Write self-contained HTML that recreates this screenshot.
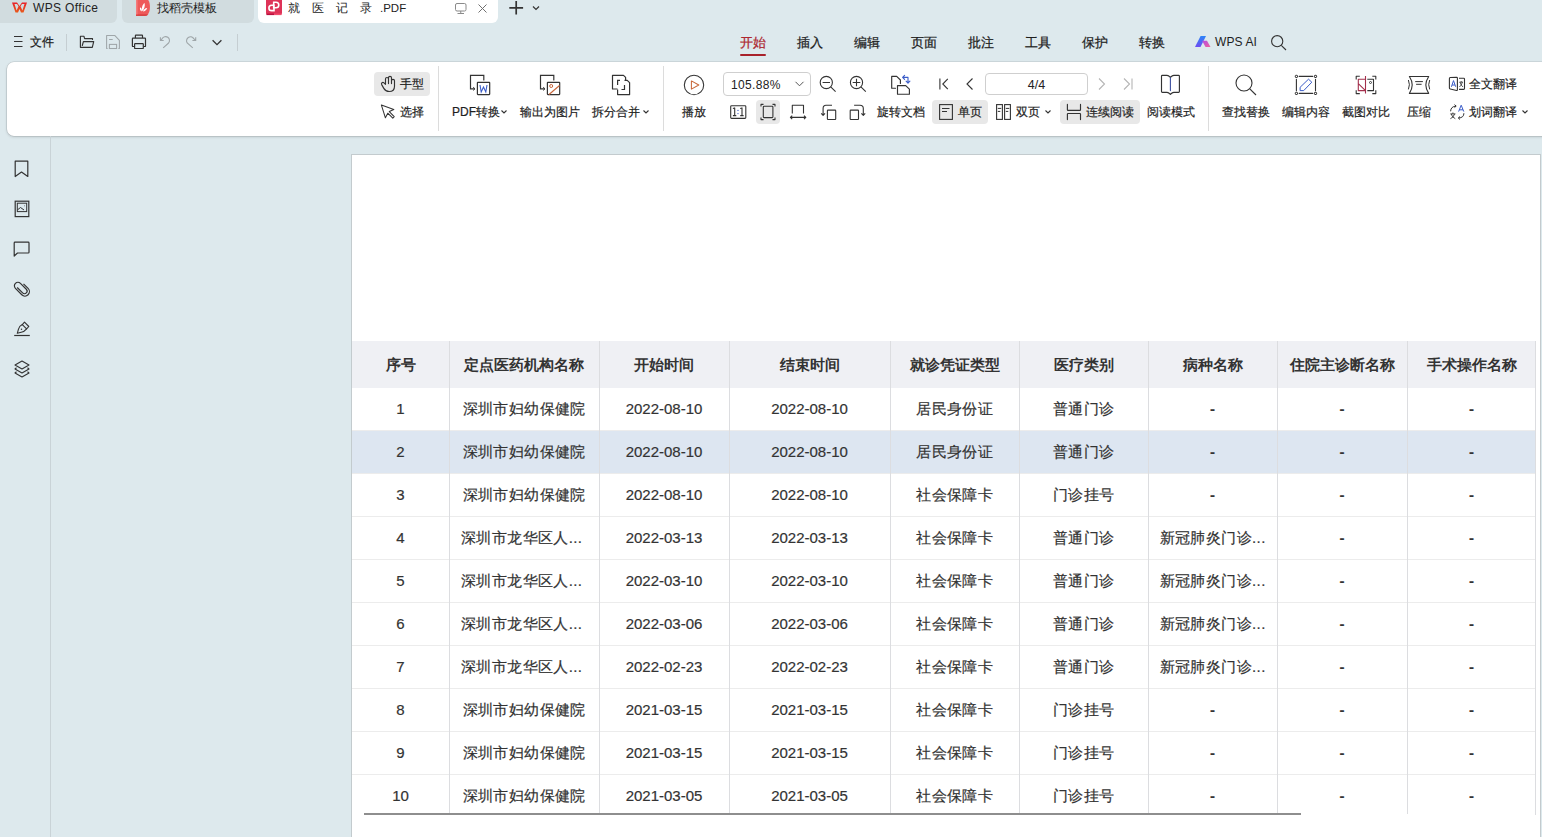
<!DOCTYPE html>
<html><head><meta charset="utf-8">
<style>
*{box-sizing:border-box;margin:0;padding:0}
html,body{width:1542px;height:837px;overflow:hidden}
body{position:relative;background:#dde9ed;font-family:"Liberation Sans",sans-serif;color:#262626}
.a{position:absolute}
svg{position:absolute;overflow:visible}
.tab{position:absolute;top:-6px;height:29px;border-radius:6px;background:#d1dcdf}
.mt{position:absolute;top:34px;font-size:13px;line-height:18px;color:#1e1e1e;-webkit-text-stroke:0.25px #1e1e1e}
.tb{position:absolute;font-size:12px;line-height:14px;color:#1e1e1e;white-space:nowrap;-webkit-text-stroke:0.2px #1e1e1e}
.sep{position:absolute;width:1px;background:#dcdcdc}
.btnbg{position:absolute;background:#e8e8e8;border-radius:4px}
/* table */
#page{position:absolute;left:351px;top:154px;width:1190px;height:700px;background:#fff;border:1px solid #c3cbce}
.th{position:absolute;top:341px;height:47px;line-height:47px;text-align:center;font-size:15px;font-weight:bold;color:#333;white-space:nowrap}
.td{position:absolute;text-align:center;font-size:15px;color:#333;white-space:nowrap;-webkit-text-stroke:0.2px #333}
.dash{font-weight:bold}
.cj{letter-spacing:0.4px;text-indent:0.4px}
</style></head><body>

<!-- ============ TAB BAR ============ -->
<div class="tab" style="left:-6px;width:123px"></div>
<div class="tab" style="left:122px;width:132px"></div>
<div class="tab" style="left:258px;width:240px;background:#fff"></div>

<!-- WPS logo -->
<svg style="left:11px;top:1px" width="17" height="13" viewBox="0 0 17 13">
  <defs><linearGradient id="wg" x1="0" y1="0" x2="0" y2="1"><stop offset="0" stop-color="#e8202a"/><stop offset="1" stop-color="#e85a1a"/></linearGradient></defs>
  <path d="M1 1.5 L6 1.5 L8.5 5 L11 1.5 L16 1.5 L12.5 11.5 L10 11.5 L8.5 8 L7 11.5 L4.5 11.5 Z M3.5 3 L5.6 9.5 L7.5 5.2 L6 3 Z M9.5 5.2 L11.4 9.5 L13.5 3 L11 3 Z" fill="url(#wg)" fill-rule="evenodd"/>
</svg>
<div class="a" style="left:33px;font-size:12px;line-height:15px;color:#222;top:1px;letter-spacing:0.35px">WPS Office</div>

<!-- docer icon -->
<svg style="left:136px;top:0px" width="15" height="17" viewBox="0 0 15 17">
  <path d="M0 -2 H9 C15.6 -2 15.6 15.8 9 15.8 H0 Z" fill="#ee5a5a"/>
  <path d="M0 14.4 H12.3 Q11 15.8 9 15.8 H0 Z" fill="#d33535"/>
  <rect x="0" y="-2" width="1.6" height="16.4" fill="#f47a7a"/>
  <path d="M6.3 11.2 C5.2 8 6.5 4.5 8.6 3.1 C9.3 6.2 8.2 9.3 6.3 11.2 Z M5.6 11.5 C3.7 10.2 3.6 8.3 4.3 7.2 C5.8 8.2 6.2 10 5.6 11.5 Z M7 11.5 C7.3 9.6 9 8 11.2 7.9 C10.5 10 8.8 11.3 7 11.5 Z" fill="#fff"/>
</svg>
<div class="a" style="left:157px;font-size:12px;line-height:15px;color:#222;top:1px">找稻壳模板</div>

<!-- pdf icon -->
<svg style="left:266px;top:-1px" width="16" height="17" viewBox="0 0 16 17">
  <rect x="0" y="-3" width="16" height="19" rx="2" fill="#de3358"/>
  <rect x="0.5" y="14.6" width="7.5" height="1.5" fill="#b8103f"/>
  <rect x="8" y="14.6" width="7.5" height="1.5" fill="#f24d6c"/>
  <path d="M7.7 3.2 H10 A2.8 2.8 0 0 1 10 8.8 H7.7 Z M8 11.6 H5.6 A2.7 2.7 0 0 1 5.6 6.2 H8 Z" fill="none" stroke="#fff" stroke-width="1.6"/>
</svg>
<div class="a" style="left:288px;font-size:12px;line-height:15px;color:#222;top:1px">就</div>
<div class="a" style="left:312px;font-size:12px;line-height:15px;color:#222;top:1px">医</div>
<div class="a" style="left:336px;font-size:12px;line-height:15px;color:#222;top:1px">记</div>
<div class="a" style="left:360px;font-size:12px;line-height:15px;color:#222;top:1px">录</div>
<div class="a" style="left:380px;font-size:11.5px;line-height:15px;color:#222;top:1px">.PDF</div>
<!-- monitor & close -->
<svg style="left:455px;top:3px" width="12" height="11" viewBox="0 0 12 11">
  <rect x="0.5" y="0.5" width="10.5" height="7.5" rx="1.5" fill="none" stroke="#8a8a8a" stroke-width="1"/>
  <path d="M5.75 8 V10 M2.5 10.5 H9" stroke="#8a8a8a" stroke-width="1"/>
</svg>
<svg style="left:478px;top:4px" width="9" height="9" viewBox="0 0 9 9">
  <path d="M0.5 0.5 L8.5 8.5 M8.5 0.5 L0.5 8.5" stroke="#707070" stroke-width="1"/>
</svg>
<svg style="left:509px;top:0px" width="15" height="15" viewBox="0 0 15 15">
  <path d="M7.2 1 V14.6 M0.3 7.8 H14.1" stroke="#333" stroke-width="1.7"/>
</svg>
<svg style="left:532px;top:5px" width="8" height="6" viewBox="0 0 8 6">
  <path d="M1 1.5 L4 4.5 L7 1.5" fill="none" stroke="#333" stroke-width="1.2"/>
</svg>

<!-- ============ MENU BAR ============ -->
<svg style="left:14px;top:36px" width="9" height="11" viewBox="0 0 9 11">
  <path d="M0 0.5 H8.5 M0 5.5 H8.5 M0 10.5 H8.5" stroke="#333" stroke-width="1"/>
</svg>
<div class="mt" style="left:30px;font-size:12px;top:33px">文件</div>
<div class="sep" style="left:66px;top:34px;height:17px;background:#c5ced2"></div>
<!-- folder -->
<svg style="left:78px;top:34px" width="18" height="16" viewBox="0 0 18 16">
  <path d="M2.4 13.3 V2.2 H5.9 L6.6 4.6 H14.5 V5.5 M2.4 13.3 H14.3 L15.7 7.6 H5.4 L4.3 11.5" fill="none" stroke="#333" stroke-width="1.15" stroke-linejoin="round" stroke-linecap="round"/>
</svg>
<!-- save -->
<svg style="left:104px;top:33px" width="18" height="17" viewBox="0 0 18 17">
  <path d="M3.6 15.5 H2.6 V2.4 H10.7 L15.4 7.4 V15.5 H14.4 M5.1 6.4 H8.7" fill="none" stroke="#9fa6a9" stroke-width="1.05" stroke-linejoin="round"/>
  <rect x="5.4" y="11.4" width="7.2" height="4.1" fill="none" stroke="#9fa6a9" stroke-width="1.05"/>
</svg>
<!-- print -->
<svg style="left:130px;top:33px" width="18" height="17" viewBox="0 0 18 17">
  <path d="M5.4 5.1 V2.7 Q5.4 2.2 5.9 2.2 H12 Q12.5 2.2 12.5 2.7 V5.1 M4.6 13.5 H3 Q2.4 13.5 2.4 12.9 V5.7 Q2.4 5.1 3 5.1 H14.9 Q15.5 5.1 15.5 5.7 V12.9 Q15.5 13.5 14.9 13.5 H13.3" fill="none" stroke="#333" stroke-width="1.2" stroke-linejoin="round"/>
  <rect x="4.6" y="10.55" width="8.7" height="4.95" rx="0.6" fill="none" stroke="#333" stroke-width="1.2"/>
</svg>
<!-- undo / redo -->
<svg style="left:158px;top:34px" width="14" height="16" viewBox="0 0 14 16">
  <path d="M2.6 6.3 L4.2 4.6 A3.9 3.9 0 1 1 10.6 9 L5.2 13.8 M2.4 3.2 V6.5 H5.7" fill="none" stroke="#9fa6a9" stroke-width="1.1"/>
</svg>
<svg style="left:183px;top:34px" width="14" height="16" viewBox="0 0 14 16">
  <path d="M12.5 6.3 L10.8 4.6 A3.9 3.9 0 1 0 4.2 9 L9.8 13.8 M12.7 3.2 V6.5 H9.4" fill="none" stroke="#9fa6a9" stroke-width="1.1"/>
</svg>
<svg style="left:212px;top:39px" width="10" height="7" viewBox="0 0 10 7">
  <path d="M0.6 1.2 L5 5.6 L9.4 1.2" fill="none" stroke="#333" stroke-width="1.3"/>
</svg>
<div class="sep" style="left:237px;top:34px;height:17px;background:#c5ced2"></div>

<!-- menu tabs -->
<div class="mt" style="left:740px;color:#ad2830;-webkit-text-stroke:0.25px #ad2830">开始</div>
<div class="a" style="left:740px;top:54px;width:26px;height:2px;background:#a8222b;border-radius:1px"></div>
<div class="mt" style="left:797px">插入</div>
<div class="mt" style="left:854px">编辑</div>
<div class="mt" style="left:911px">页面</div>
<div class="mt" style="left:968px">批注</div>
<div class="mt" style="left:1025px">工具</div>
<div class="mt" style="left:1082px">保护</div>
<div class="mt" style="left:1139px">转换</div>
<svg style="left:1194px;top:35px" width="18" height="13" viewBox="0 0 18 13">
  <defs>
   <linearGradient id="ai1" x1="0" y1="0" x2="0" y2="1"><stop offset="0" stop-color="#2d86f7"/><stop offset="1" stop-color="#6d4cf2"/></linearGradient>
   <linearGradient id="ai2" x1="0" y1="0" x2="1" y2="1"><stop offset="0" stop-color="#b04ee6"/><stop offset="1" stop-color="#f0609c"/></linearGradient>
  </defs>
  <path d="M1 12 L6.5 12 L12 1 L6.6 1 Z" fill="url(#ai1)"/>
  <path d="M8 5.7 L13 5.7 L16.5 12 L11.6 12 Z" fill="url(#ai2)"/>
</svg>
<div class="a" style="left:1215px;top:35px;font-size:12px;line-height:14px;color:#1e1e1e;letter-spacing:0.1px">WPS AI</div>
<svg style="left:1271px;top:35px" width="16" height="16" viewBox="0 0 16 16">
  <circle cx="6.2" cy="6.2" r="5.6" fill="none" stroke="#333" stroke-width="1.1"/>
  <path d="M10.3 10.3 L15 15" stroke="#333" stroke-width="1.1"/>
</svg>

<!-- ============ TOOLBAR PANEL ============ -->
<div class="a" style="left:7px;top:62px;width:1545px;height:74px;background:#fff;border-radius:7px;box-shadow:0 0 0 0.6px rgba(0,0,0,0.13),0 1px 3px rgba(0,0,0,0.16)"></div>

<!-- hand/select -->
<div class="btnbg" style="left:374px;top:72px;width:56px;height:24px"></div>
<svg style="left:378px;top:72px" width="20" height="22" viewBox="0 0 20 22">
  <path d="M7.5 12.3 V7 A1.5 1.5 0 0 1 10.5 7 V11.6 M10.5 7 V5.8 A1.5 1.5 0 0 1 13.5 5.8 V11.6 M13.5 8.8 A1.5 1.5 0 0 1 16.5 8.8 V14.2 Q16.5 19.5 11.2 19.5 Q7.6 19.5 5.8 16.4 L3.7 12.6 Q3.1 11.4 4 10.7 Q5 10 6 10.9 L7.5 12.3" fill="none" stroke="#333" stroke-width="1.15" stroke-linejoin="round" stroke-linecap="round"/>
</svg>
<div class="tb" style="left:400px;top:77px">手型</div>
<svg style="left:380px;top:104px" width="16" height="16" viewBox="0 0 16 16">
  <path d="M1.4 1.1 L13.8 5.6 L9.3 7.6 L14.2 12.6 L12.8 14.1 L7.8 9.2 L5.4 13.8 Z" fill="none" stroke="#333" stroke-width="1.05" stroke-linejoin="round"/>
</svg>
<div class="tb" style="left:400px;top:104.5px">选择</div>
<div class="sep" style="left:438px;top:66px;height:65px"></div>

<!-- PDF convert -->
<svg style="left:469px;top:74px" width="22" height="22" viewBox="0 0 22 22">
  <path d="M14.8 6.5 V1.3 H1.5 V14.8 H5.5" fill="none" stroke="#333" stroke-width="1.2"/>
  <path d="M4.2 13.2 L6 14.8 L4.2 16.4" fill="none" stroke="#333" stroke-width="1"/>
  <rect x="8.4" y="8.3" width="12.3" height="12.3" rx="0.5" fill="#fff" stroke="#333" stroke-width="1.2"/>
  <path d="M11 11 L12.2 18 L14.5 13 L16.8 18 L18 11" fill="none" stroke="#3a5cc8" stroke-width="1.1"/>
</svg>
<div class="tb" style="left:452px;top:104.5px">PDF转换</div>
<svg style="left:501px;top:110px" width="6" height="4" viewBox="0 0 6 4"><path d="M0.5 0.5 L3 3 L5.5 0.5" fill="none" stroke="#333" stroke-width="1.1"/></svg>

<!-- export image -->
<svg style="left:539px;top:74px" width="22" height="22" viewBox="0 0 22 22">
  <path d="M14.8 6.5 V1.3 H1.5 V14.8 H5.5" fill="none" stroke="#333" stroke-width="1.2"/>
  <path d="M4.2 13.2 L6 14.8 L4.2 16.4" fill="none" stroke="#333" stroke-width="1"/>
  <rect x="8.4" y="8.3" width="12.3" height="12.3" rx="0.5" fill="#fff" stroke="#333" stroke-width="1.2"/>
  <circle cx="12.2" cy="12" r="1.5" fill="none" stroke="#c8653a" stroke-width="1"/>
  <path d="M10 20.5 L20.5 11.5" stroke="#c8653a" stroke-width="1.1"/>
</svg>
<div class="tb" style="left:520px;top:104.5px">输出为图片</div>

<!-- split merge -->
<svg style="left:611px;top:74px" width="20" height="22" viewBox="0 0 20 22">
  <path d="M6.5 15 H1.5 V1.3 H12.5 L14.6 3.4 V6.3" fill="none" stroke="#333" stroke-width="1.2" stroke-linejoin="round"/>
  <path d="M13.5 6.3 H16.2 L18.6 8.7 V20.6 H6.6 V15.5" fill="none" stroke="#333" stroke-width="1.2" stroke-linejoin="round"/>
  <path d="M9 6.3 H6.6 V11 M10.5 15.5 H13.5 V11" fill="none" stroke="#333" stroke-width="1.2"/>
</svg>
<div class="tb" style="left:592px;top:104.5px">拆分合并</div>
<svg style="left:643px;top:110px" width="6" height="4" viewBox="0 0 6 4"><path d="M0.5 0.5 L3 3 L5.5 0.5" fill="none" stroke="#333" stroke-width="1.1"/></svg>
<div class="sep" style="left:663px;top:66px;height:65px"></div>

<!-- play -->
<svg style="left:683px;top:74px" width="22" height="22" viewBox="0 0 22 22">
  <circle cx="11" cy="11" r="9.7" fill="none" stroke="#333" stroke-width="1.05"/>
  <path d="M8.4 6.9 L15.8 11 L8.4 15.1 Z" fill="none" stroke="#c8683a" stroke-width="1.05" stroke-linejoin="round"/>
</svg>
<div class="tb" style="left:682px;top:104.5px">播放</div>

<!-- zoom box -->
<div class="a" style="left:723px;top:72px;width:88px;height:24px;border:1px solid #cfcfcf;border-radius:4px"></div>
<div class="tb" style="left:731px;top:78px;font-size:12px;-webkit-text-stroke:0;color:#222;letter-spacing:0.35px">105.88%</div>
<svg style="left:795px;top:81px" width="9" height="6" viewBox="0 0 9 6"><path d="M0.5 0.8 L4.5 4.8 L8.5 0.8" fill="none" stroke="#555" stroke-width="1"/></svg>
<svg style="left:819px;top:75px" width="18" height="18" viewBox="0 0 18 18">
  <circle cx="7.3" cy="7.5" r="6.1" fill="none" stroke="#333" stroke-width="1.1"/>
  <path d="M11.7 11.9 L16.6 16.7 M3.6 7.5 H11" stroke="#333" stroke-width="1.1"/>
</svg>
<svg style="left:849px;top:75px" width="18" height="18" viewBox="0 0 18 18">
  <circle cx="7.5" cy="7.5" r="6.1" fill="none" stroke="#333" stroke-width="1.1"/>
  <path d="M11.9 11.9 L16.8 16.7 M3.7 7.5 H11.3 M7.5 3.7 V11.3" stroke="#333" stroke-width="1.1"/>
</svg>
<!-- rotate doc -->
<svg style="left:884px;top:70px" width="32" height="28" viewBox="0 0 32 28">
  <path d="M11.5 18.2 H7.7 V6.4 H12.7 L16.4 10 V13.4" fill="none" stroke="#333" stroke-width="1.15" stroke-linejoin="round" stroke-linecap="round"/>
  <path d="M13.5 15.6 H21.7 L25.4 19.1 V24.2 H13.5 Z" fill="none" stroke="#333" stroke-width="1.15" stroke-linejoin="round"/>
  <path d="M24 7.4 H18.8 M20.6 5.4 L18.6 7.4 L20.6 9.4 M24 7.4 V13 M22.1 11.2 L24 13.1 L25.9 11.2" fill="none" stroke="#3a5cc8" stroke-width="1.1" stroke-linejoin="round" stroke-linecap="round"/>
</svg>

<!-- row 2 view icons -->
<div class="btnbg" style="left:756px;top:100px;width:24px;height:24px"></div>
<svg style="left:726px;top:98px" width="144" height="28" viewBox="0 0 144 28">
  <g fill="none" stroke="#333" stroke-width="1.1" stroke-linejoin="round">
  <rect x="4.7" y="7.8" width="15.1" height="12.6" rx="0.8"/>
  <path d="M6.9 10.6 L8.7 9.9 V17.4 M6.9 17.6 H10.3 M14.2 10.6 L16 9.9 V17.4 M14.2 17.6 H17.6"/>
  <path d="M35 8.6 V6.4 H37.5 M46.5 6.4 H49 V8.6 M49 19.4 V21.6 H46.5 M37.5 21.6 H35 V19.4"/>
  <rect x="37.3" y="8.2" width="9.6" height="11.4" rx="0.8"/>
  <path d="M66.3 15.4 V7.3 H77.5 V15.4 M64.4 19.4 H79.8 M66.2 17.6 L64.4 19.4 L66.2 21.2 M78 17.6 L79.8 19.4 L78 21.2"/>
  <rect x="101.4" y="12.1" width="8.3" height="9.4" rx="0.6"/>
  <path d="M106 7.3 H100 Q97.1 7.3 97.1 10.5 V17.3 M95.2 15.4 L97.1 17.4 L99 15.4"/>
  <rect x="124.2" y="12.1" width="8.3" height="9.4" rx="0.6"/>
  <path d="M128.1 7.3 H134 Q137.3 7.3 137.3 10.5 V17.3 M135.4 15.4 L137.3 17.4 L139.2 15.4"/>
  </g>
  <circle cx="12" cy="12.4" r="0.65" fill="#3a5cc8"/><circle cx="12" cy="15.6" r="0.65" fill="#3a5cc8"/>
</svg>
<div class="tb" style="left:877px;top:104.5px">旋转文档</div>

<!-- page nav -->
<svg style="left:939px;top:78px" width="10" height="12" viewBox="0 0 10 12">
  <path d="M0.9 0.5 V11.5 M8.8 0.8 L3.8 6 L8.8 11.2" fill="none" stroke="#333" stroke-width="1.1"/>
</svg>
<svg style="left:966px;top:78px" width="8" height="12" viewBox="0 0 8 12">
  <path d="M6.5 0.5 L1 6 L6.5 11.5" fill="none" stroke="#333" stroke-width="1.1"/>
</svg>
<div class="a" style="left:985px;top:73px;width:103px;height:22px;border:1px solid #cfcfcf;border-radius:4px"></div>
<div class="tb" style="left:985px;top:78px;width:103px;text-align:center;font-size:12.5px;-webkit-text-stroke:0;color:#222">4/4</div>
<svg style="left:1098px;top:78px" width="8" height="12" viewBox="0 0 8 12">
  <path d="M1 0.5 L6.5 6 L1 11.5" fill="none" stroke="#b5b5b5" stroke-width="1.1"/>
</svg>
<svg style="left:1123px;top:78px" width="10" height="12" viewBox="0 0 10 12">
  <path d="M1 0.5 L6.5 6 L1 11.5 M9 0.5 V11.5" fill="none" stroke="#b5b5b5" stroke-width="1.1"/>
</svg>
<!-- single/double/continuous -->
<div class="btnbg" style="left:932px;top:100px;width:56px;height:24px"></div>
<svg style="left:939px;top:104px" width="14" height="16" viewBox="0 0 14 16">
  <rect x="0.6" y="0.6" width="12.8" height="14.8" fill="none" stroke="#333" stroke-width="1.1"/>
  <path d="M3 4.5 H10.5 M3 7.5 H8" stroke="#333" stroke-width="1"/>
</svg>
<div class="tb" style="left:958px;top:104.5px">单页</div>
<svg style="left:996px;top:104px" width="15" height="16" viewBox="0 0 15 16">
  <rect x="0.6" y="0.6" width="5.8" height="14.8" fill="none" stroke="#333" stroke-width="1.1"/>
  <rect x="8.6" y="0.6" width="5.8" height="14.8" fill="none" stroke="#333" stroke-width="1.1"/>
  <path d="M2.2 4.4 H4.9 M2.2 7.4 H3.9 M10.2 4.4 H12.9 M10.2 7.4 H11.9" stroke="#333" stroke-width="1" stroke-linecap="round"/>
</svg>
<div class="tb" style="left:1016px;top:104.5px">双页</div>
<svg style="left:1045px;top:110px" width="6" height="4" viewBox="0 0 6 4"><path d="M0.5 0.5 L3 3 L5.5 0.5" fill="none" stroke="#333" stroke-width="1.1"/></svg>
<div class="btnbg" style="left:1060px;top:100px;width:80px;height:24px"></div>
<svg style="left:1066px;top:104px" width="16" height="16" viewBox="0 0 16 16">
  <path d="M1.4 0.4 V5.8 Q1.4 6.4 2 6.4 H13.9 Q14.5 6.4 14.5 5.8 V0.4 M1.4 15.6 V10.1 Q1.4 9.5 2 9.5 H13.9 Q14.5 9.5 14.5 10.1 V15.6" fill="none" stroke="#333" stroke-width="1.15" stroke-linecap="round"/>
</svg>
<div class="tb" style="left:1086px;top:104.5px">连续阅读</div>
<!-- reading mode -->
<svg style="left:1160px;top:74px" width="21" height="22" viewBox="0 0 21 22">
  <path d="M1.5 2.2 Q1.5 1.4 2.3 1.4 H7 Q8.5 1.4 10.4 3.4 Q12.3 1.4 13.8 1.4 H18.6 Q19.4 1.4 19.4 2.2 V17.6 Q19.4 18.4 18.6 18.4 H13.8 Q12.3 18.4 10.4 20.4 Q8.5 18.4 7 18.4 H2.3 Q1.5 18.4 1.5 17.6 Z" fill="none" stroke="#333" stroke-width="1.15" stroke-linejoin="round"/>
  <path d="M10.4 3.8 V16.6" stroke="#3b4fa0" stroke-width="1.1" stroke-linecap="round"/>
</svg>
<div class="tb" style="left:1147px;top:104.5px">阅读模式</div>
<div class="sep" style="left:1208px;top:66px;height:65px"></div>

<!-- find -->
<svg style="left:1235px;top:74px" width="22" height="22" viewBox="0 0 22 22">
  <circle cx="9" cy="9" r="8" fill="none" stroke="#333" stroke-width="1.1"/>
  <path d="M14.8 14.8 L21 21" stroke="#333" stroke-width="1.1"/>
</svg>
<div class="tb" style="left:1222px;top:104.5px">查找替换</div>
<!-- edit content -->
<svg style="left:1294px;top:74px" width="24" height="22" viewBox="0 0 24 22">
  <path d="M5.2 2.4 H18.7 M5.2 19.4 H18.7 M2.4 5.2 V16.7 M21.5 5.2 V16.7" stroke="#333" stroke-width="1.1" stroke-linecap="round"/>
  <rect x="1.3" y="1.3" width="2.2" height="2.2" rx="0.6" fill="none" stroke="#333" stroke-width="1"/>
  <rect x="20.4" y="1.3" width="2.2" height="2.2" rx="0.6" fill="none" stroke="#333" stroke-width="1"/>
  <rect x="1.3" y="18.3" width="2.2" height="2.2" rx="0.6" fill="none" stroke="#333" stroke-width="1"/>
  <rect x="20.4" y="18.3" width="2.2" height="2.2" rx="0.6" fill="none" stroke="#333" stroke-width="1"/>
  <path d="M6.1 13.3 L14.5 5.2 L17.8 8.2 L9.7 16.6 H6.1 Z" fill="none" stroke="#3a5cc8" stroke-width="1" stroke-linejoin="round"/>
</svg>
<div class="tb" style="left:1282px;top:104.5px">编辑内容</div>
<!-- screenshot compare -->
<svg style="left:1354px;top:74px" width="24" height="22" viewBox="0 0 24 22">
  <path d="M2.2 5.5 V2.3 H5.8 M18.3 2.3 H21.8 V5.5 M2.2 16.3 V19.6 H5.8 M18.3 19.6 H21.8 V16.3" fill="none" stroke="#333" stroke-width="1.1" stroke-linejoin="round"/>
  <path d="M13.3 5.2 H19.5 V16.6 H13.3" fill="none" stroke="#333" stroke-width="1.1" stroke-linejoin="round"/>
  <circle cx="16.5" cy="8.5" r="1" fill="none" stroke="#333" stroke-width="0.9"/>
  <path d="M11.5 5.2 H4.3 V16.6 H11.5 M11.5 2 V19.6 M4.3 9.7 L11.5 16.6" fill="none" stroke="#a3304c" stroke-width="1.1" stroke-linejoin="round"/>
</svg>
<div class="tb" style="left:1342px;top:104.5px">截图对比</div>
<!-- compress -->
<svg style="left:1407px;top:74px" width="24" height="22" viewBox="0 0 24 22">
  <path d="M2.4 2.5 H21.7 Q16 11 21.7 19.4 H2.4 Q8 11 2.4 2.5 Z" fill="none" stroke="#333" stroke-width="1.1" stroke-linejoin="round"/>
  <path d="M1.4 6 Q3.4 10.7 1.4 15.4 M22.7 6 Q20.7 10.7 22.7 15.4" fill="none" stroke="#333" stroke-width="1"/>
  <path d="M8.2 7.6 H15.9 M9.1 10.3 H14.6" stroke="#333" stroke-width="1"/>
</svg>
<div class="tb" style="left:1407px;top:104.5px">压缩</div>
<!-- translate -->
<svg style="left:1448px;top:76px" width="18" height="16" viewBox="0 0 18 16">
  <path d="M1.4 2.4 Q1.4 1.6 2.2 1.5 L8.6 1.2 Q9.4 1.2 9.4 2 V13.8 Q9.4 14.6 8.6 14.5 L2.2 13 Q1.4 12.9 1.4 12 Z" fill="none" stroke="#333" stroke-width="1.1" stroke-linejoin="round"/>
  <path d="M11 2.3 H15.7 Q16.5 2.3 16.5 3.1 V12.6 Q16.5 13.4 15.7 13.4 H11" fill="none" stroke="#333" stroke-width="1.1"/>
  <path d="M3.4 10.8 L5.5 4.6 L7.7 10.8 M4.1 9 H7" fill="none" stroke="#3a5cc8" stroke-width="1"/>
  <path d="M11.4 6.2 H15 M13.2 5 V6.2 M12 6.2 Q13 9.5 15 11 M14.4 6.2 Q13.5 9.5 11.4 11" fill="none" stroke="#333" stroke-width="0.8"/>
</svg>
<div class="tb" style="left:1469px;top:77px">全文翻译</div>
<svg style="left:1448px;top:104px" width="18" height="16" viewBox="0 0 18 16">
  <path d="M2.6 7.3 Q2.8 2.5 8 2.1 M6.5 0.6 L8.2 2.1 L6.5 3.6" fill="none" stroke="#333" stroke-width="1"/>
  <path d="M10.6 7.6 L13.2 1.2 L15.8 7.6 M11.4 5.8 H15" fill="none" stroke="#3a5cc8" stroke-width="1"/>
  <path d="M2.4 9.9 H7.4 M4.9 8.5 V9.9 M3.1 9.9 Q4.4 13.5 7.3 14.7 M6.6 9.9 Q5.6 13.5 2.4 14.7" fill="none" stroke="#333" stroke-width="0.9"/>
  <path d="M15.9 9.2 Q15.9 13.8 10.5 14 M12 12.5 L10.3 14 L12 15.5" fill="none" stroke="#333" stroke-width="1"/>
</svg>
<div class="tb" style="left:1469px;top:104.5px">划词翻译</div>
<svg style="left:1522px;top:110px" width="6" height="4" viewBox="0 0 6 4"><path d="M0.5 0.5 L3 3 L5.5 0.5" fill="none" stroke="#333" stroke-width="1.1"/></svg>


<!-- ============ SIDEBAR ============ -->
<div class="a" style="left:50px;top:136px;width:1px;height:701px;background:#c9d3d7"></div>
<!-- bookmark -->
<svg style="left:14px;top:160px" width="15" height="18" viewBox="0 0 15 18">
  <path d="M1.2 1.2 H13.8 V16.5 L7.5 12 L1.2 16.5 Z" fill="none" stroke="#333" stroke-width="1.2" stroke-linejoin="round"/>
</svg>
<!-- thumbnail -->
<svg style="left:14px;top:200px" width="16" height="18" viewBox="0 0 16 18">
  <rect x="1.2" y="1.2" width="13.6" height="15.4" fill="none" stroke="#333" stroke-width="1.2"/>
  <rect x="3.3" y="3.2" width="9.4" height="8.4" fill="none" stroke="#333" stroke-width="1"/>
  <path d="M3.3 10 L6.5 7.5 L10 10 M10.5 5.8 L11 5.8" fill="none" stroke="#333" stroke-width="1"/>
</svg>
<!-- comment -->
<svg style="left:13px;top:241px" width="17" height="16" viewBox="0 0 17 16">
  <path d="M2 1.2 H15.2 Q16 1.2 16 2 V11.2 Q16 12 15.2 12 H4.5 L1.2 15 V2 Q1.2 1.2 2 1.2 Z" fill="none" stroke="#333" stroke-width="1.2" stroke-linejoin="round"/>
</svg>
<!-- paperclip -->
<svg style="left:13px;top:281px" width="17" height="16" viewBox="0 0 17 16">
  <path transform="translate(4.9 4.9) rotate(-45)" d="M5.4 2.5 V9 A4.45 4.45 0 0 1 -3.5 9 V0 A3.55 3.55 0 0 1 3.6 0 V8.3 A2.6 2.6 0 0 1 -1.6 8.3 V0.6" fill="none" stroke="#333" stroke-width="1.2"/>
</svg>
<!-- pen sign -->
<svg style="left:13px;top:321px" width="18" height="16" viewBox="0 0 18 16">
  <path d="M11.5 1.2 L15.8 5.5 L13.6 7.9 L9.3 3.6 Z" fill="none" stroke="#333" stroke-width="1.1" stroke-linejoin="round"/>
  <path d="M9.3 3.6 Q6 5.3 5.4 8.3 L4.3 12.3 L8.2 11.2 Q11.5 10.6 13.6 7.9" fill="none" stroke="#333" stroke-width="1.1" stroke-linejoin="round"/>
  <circle cx="8.5" cy="8.3" r="0.75" fill="#333"/>
  <path d="M1.2 14.5 H16.8" stroke="#333" stroke-width="1.2"/>
</svg>
<!-- layers -->
<svg style="left:14px;top:360px" width="16" height="18" viewBox="0 0 16 18">
  <path d="M8 1 L15 5 L8 9 L1 5 Z" fill="none" stroke="#333" stroke-width="1.1" stroke-linejoin="round"/>
  <path d="M2.5 7.8 L1 9 L8 13 L15 9 L13.5 7.8 M2.5 11.8 L1 13 L8 17 L15 13 L13.5 11.8" fill="none" stroke="#333" stroke-width="1.1" stroke-linejoin="round"/>
</svg>


<!-- ============ PAGE ============ -->
<div id="page"></div>
<div class="a" style="left:352px;top:341px;width:1184px;height:47px;background:#eff0f4"></div>
<div class="a" style="left:352px;top:430px;width:1184px;height:43px;background:#dde6f1"></div>
<div class="a" style="left:352px;top:430px;width:1184px;height:1px;background:#ececec"></div>
<div class="a" style="left:352px;top:473px;width:1184px;height:1px;background:#ececec"></div>
<div class="a" style="left:352px;top:516px;width:1184px;height:1px;background:#ececec"></div>
<div class="a" style="left:352px;top:559px;width:1184px;height:1px;background:#ececec"></div>
<div class="a" style="left:352px;top:602px;width:1184px;height:1px;background:#ececec"></div>
<div class="a" style="left:352px;top:645px;width:1184px;height:1px;background:#ececec"></div>
<div class="a" style="left:352px;top:688px;width:1184px;height:1px;background:#ececec"></div>
<div class="a" style="left:352px;top:731px;width:1184px;height:1px;background:#ececec"></div>
<div class="a" style="left:352px;top:774px;width:1184px;height:1px;background:#ececec"></div>
<div class="a" style="left:449px;top:341px;width:1px;height:473px;background:#dcdde0"></div>
<div class="a" style="left:599px;top:341px;width:1px;height:473px;background:#dcdde0"></div>
<div class="a" style="left:729px;top:341px;width:1px;height:473px;background:#dcdde0"></div>
<div class="a" style="left:890px;top:341px;width:1px;height:473px;background:#dcdde0"></div>
<div class="a" style="left:1019px;top:341px;width:1px;height:473px;background:#dcdde0"></div>
<div class="a" style="left:1148px;top:341px;width:1px;height:473px;background:#dcdde0"></div>
<div class="a" style="left:1277px;top:341px;width:1px;height:473px;background:#dcdde0"></div>
<div class="a" style="left:1407px;top:341px;width:1px;height:473px;background:#dcdde0"></div>
<div class="a" style="left:1535px;top:341px;width:1px;height:474px;background:#dcdde0"></div>
<div class="a" style="left:364px;top:813px;width:937px;height:2px;background:#8e8e8e"></div>
<div class="th" style="left:352px;width:97px">序号</div>
<div class="th" style="left:449px;width:150px">定点医药机构名称</div>
<div class="th" style="left:599px;width:130px">开始时间</div>
<div class="th" style="left:729px;width:161px">结束时间</div>
<div class="th" style="left:890px;width:129px">就诊凭证类型</div>
<div class="th" style="left:1019px;width:129px">医疗类别</div>
<div class="th" style="left:1148px;width:129px">病种名称</div>
<div class="th" style="left:1277px;width:130px">住院主诊断名称</div>
<div class="th" style="left:1407px;width:129px">手术操作名称</div>
<div class="td" style="left:352px;width:97px;top:388px;height:42px;line-height:42px">1</div>
<div class="td cj" style="left:449px;width:150px;padding-right:0;top:388px;height:42px;line-height:42px">深圳市妇幼保健院</div>
<div class="td" style="left:599px;width:130px;top:388px;height:42px;line-height:42px">2022-08-10</div>
<div class="td" style="left:729px;width:161px;top:388px;height:42px;line-height:42px">2022-08-10</div>
<div class="td cj" style="left:890px;width:129px;top:388px;height:42px;line-height:42px">居民身份证</div>
<div class="td cj" style="left:1019px;width:129px;top:388px;height:42px;line-height:42px">普通门诊</div>
<div class="td dash" style="left:1148px;width:129px;top:388px;height:42px;line-height:42px">-</div>
<div class="td dash" style="left:1277px;width:130px;top:388px;height:42px;line-height:42px">-</div>
<div class="td dash" style="left:1407px;width:129px;top:388px;height:42px;line-height:42px">-</div>
<div class="td" style="left:352px;width:97px;top:430px;height:43px;line-height:43px">2</div>
<div class="td cj" style="left:449px;width:150px;padding-right:0;top:430px;height:43px;line-height:43px">深圳市妇幼保健院</div>
<div class="td" style="left:599px;width:130px;top:430px;height:43px;line-height:43px">2022-08-10</div>
<div class="td" style="left:729px;width:161px;top:430px;height:43px;line-height:43px">2022-08-10</div>
<div class="td cj" style="left:890px;width:129px;top:430px;height:43px;line-height:43px">居民身份证</div>
<div class="td cj" style="left:1019px;width:129px;top:430px;height:43px;line-height:43px">普通门诊</div>
<div class="td dash" style="left:1148px;width:129px;top:430px;height:43px;line-height:43px">-</div>
<div class="td dash" style="left:1277px;width:130px;top:430px;height:43px;line-height:43px">-</div>
<div class="td dash" style="left:1407px;width:129px;top:430px;height:43px;line-height:43px">-</div>
<div class="td" style="left:352px;width:97px;top:473px;height:43px;line-height:43px">3</div>
<div class="td cj" style="left:449px;width:150px;padding-right:0;top:473px;height:43px;line-height:43px">深圳市妇幼保健院</div>
<div class="td" style="left:599px;width:130px;top:473px;height:43px;line-height:43px">2022-08-10</div>
<div class="td" style="left:729px;width:161px;top:473px;height:43px;line-height:43px">2022-08-10</div>
<div class="td cj" style="left:890px;width:129px;top:473px;height:43px;line-height:43px">社会保障卡</div>
<div class="td cj" style="left:1019px;width:129px;top:473px;height:43px;line-height:43px">门诊挂号</div>
<div class="td dash" style="left:1148px;width:129px;top:473px;height:43px;line-height:43px">-</div>
<div class="td dash" style="left:1277px;width:130px;top:473px;height:43px;line-height:43px">-</div>
<div class="td dash" style="left:1407px;width:129px;top:473px;height:43px;line-height:43px">-</div>
<div class="td" style="left:352px;width:97px;top:516px;height:43px;line-height:43px">4</div>
<div class="td cj" style="left:449px;width:145px;top:516px;height:43px;line-height:43px">深圳市龙华区人...</div>
<div class="td" style="left:599px;width:130px;top:516px;height:43px;line-height:43px">2022-03-13</div>
<div class="td" style="left:729px;width:161px;top:516px;height:43px;line-height:43px">2022-03-13</div>
<div class="td cj" style="left:890px;width:129px;top:516px;height:43px;line-height:43px">社会保障卡</div>
<div class="td cj" style="left:1019px;width:129px;top:516px;height:43px;line-height:43px">普通门诊</div>
<div class="td cj" style="left:1148px;width:129px;top:516px;height:43px;line-height:43px">新冠肺炎门诊...</div>
<div class="td dash" style="left:1277px;width:130px;top:516px;height:43px;line-height:43px">-</div>
<div class="td dash" style="left:1407px;width:129px;top:516px;height:43px;line-height:43px">-</div>
<div class="td" style="left:352px;width:97px;top:559px;height:43px;line-height:43px">5</div>
<div class="td cj" style="left:449px;width:145px;top:559px;height:43px;line-height:43px">深圳市龙华区人...</div>
<div class="td" style="left:599px;width:130px;top:559px;height:43px;line-height:43px">2022-03-10</div>
<div class="td" style="left:729px;width:161px;top:559px;height:43px;line-height:43px">2022-03-10</div>
<div class="td cj" style="left:890px;width:129px;top:559px;height:43px;line-height:43px">社会保障卡</div>
<div class="td cj" style="left:1019px;width:129px;top:559px;height:43px;line-height:43px">普通门诊</div>
<div class="td cj" style="left:1148px;width:129px;top:559px;height:43px;line-height:43px">新冠肺炎门诊...</div>
<div class="td dash" style="left:1277px;width:130px;top:559px;height:43px;line-height:43px">-</div>
<div class="td dash" style="left:1407px;width:129px;top:559px;height:43px;line-height:43px">-</div>
<div class="td" style="left:352px;width:97px;top:602px;height:43px;line-height:43px">6</div>
<div class="td cj" style="left:449px;width:145px;top:602px;height:43px;line-height:43px">深圳市龙华区人...</div>
<div class="td" style="left:599px;width:130px;top:602px;height:43px;line-height:43px">2022-03-06</div>
<div class="td" style="left:729px;width:161px;top:602px;height:43px;line-height:43px">2022-03-06</div>
<div class="td cj" style="left:890px;width:129px;top:602px;height:43px;line-height:43px">社会保障卡</div>
<div class="td cj" style="left:1019px;width:129px;top:602px;height:43px;line-height:43px">普通门诊</div>
<div class="td cj" style="left:1148px;width:129px;top:602px;height:43px;line-height:43px">新冠肺炎门诊...</div>
<div class="td dash" style="left:1277px;width:130px;top:602px;height:43px;line-height:43px">-</div>
<div class="td dash" style="left:1407px;width:129px;top:602px;height:43px;line-height:43px">-</div>
<div class="td" style="left:352px;width:97px;top:645px;height:43px;line-height:43px">7</div>
<div class="td cj" style="left:449px;width:145px;top:645px;height:43px;line-height:43px">深圳市龙华区人...</div>
<div class="td" style="left:599px;width:130px;top:645px;height:43px;line-height:43px">2022-02-23</div>
<div class="td" style="left:729px;width:161px;top:645px;height:43px;line-height:43px">2022-02-23</div>
<div class="td cj" style="left:890px;width:129px;top:645px;height:43px;line-height:43px">社会保障卡</div>
<div class="td cj" style="left:1019px;width:129px;top:645px;height:43px;line-height:43px">普通门诊</div>
<div class="td cj" style="left:1148px;width:129px;top:645px;height:43px;line-height:43px">新冠肺炎门诊...</div>
<div class="td dash" style="left:1277px;width:130px;top:645px;height:43px;line-height:43px">-</div>
<div class="td dash" style="left:1407px;width:129px;top:645px;height:43px;line-height:43px">-</div>
<div class="td" style="left:352px;width:97px;top:688px;height:43px;line-height:43px">8</div>
<div class="td cj" style="left:449px;width:150px;padding-right:0;top:688px;height:43px;line-height:43px">深圳市妇幼保健院</div>
<div class="td" style="left:599px;width:130px;top:688px;height:43px;line-height:43px">2021-03-15</div>
<div class="td" style="left:729px;width:161px;top:688px;height:43px;line-height:43px">2021-03-15</div>
<div class="td cj" style="left:890px;width:129px;top:688px;height:43px;line-height:43px">社会保障卡</div>
<div class="td cj" style="left:1019px;width:129px;top:688px;height:43px;line-height:43px">门诊挂号</div>
<div class="td dash" style="left:1148px;width:129px;top:688px;height:43px;line-height:43px">-</div>
<div class="td dash" style="left:1277px;width:130px;top:688px;height:43px;line-height:43px">-</div>
<div class="td dash" style="left:1407px;width:129px;top:688px;height:43px;line-height:43px">-</div>
<div class="td" style="left:352px;width:97px;top:731px;height:43px;line-height:43px">9</div>
<div class="td cj" style="left:449px;width:150px;padding-right:0;top:731px;height:43px;line-height:43px">深圳市妇幼保健院</div>
<div class="td" style="left:599px;width:130px;top:731px;height:43px;line-height:43px">2021-03-15</div>
<div class="td" style="left:729px;width:161px;top:731px;height:43px;line-height:43px">2021-03-15</div>
<div class="td cj" style="left:890px;width:129px;top:731px;height:43px;line-height:43px">社会保障卡</div>
<div class="td cj" style="left:1019px;width:129px;top:731px;height:43px;line-height:43px">门诊挂号</div>
<div class="td dash" style="left:1148px;width:129px;top:731px;height:43px;line-height:43px">-</div>
<div class="td dash" style="left:1277px;width:130px;top:731px;height:43px;line-height:43px">-</div>
<div class="td dash" style="left:1407px;width:129px;top:731px;height:43px;line-height:43px">-</div>
<div class="td" style="left:352px;width:97px;top:774px;height:43px;line-height:43px">10</div>
<div class="td cj" style="left:449px;width:150px;padding-right:0;top:774px;height:43px;line-height:43px">深圳市妇幼保健院</div>
<div class="td" style="left:599px;width:130px;top:774px;height:43px;line-height:43px">2021-03-05</div>
<div class="td" style="left:729px;width:161px;top:774px;height:43px;line-height:43px">2021-03-05</div>
<div class="td cj" style="left:890px;width:129px;top:774px;height:43px;line-height:43px">社会保障卡</div>
<div class="td cj" style="left:1019px;width:129px;top:774px;height:43px;line-height:43px">门诊挂号</div>
<div class="td dash" style="left:1148px;width:129px;top:774px;height:43px;line-height:43px">-</div>
<div class="td dash" style="left:1277px;width:130px;top:774px;height:43px;line-height:43px">-</div>
<div class="td dash" style="left:1407px;width:129px;top:774px;height:43px;line-height:43px">-</div>

</body></html>
